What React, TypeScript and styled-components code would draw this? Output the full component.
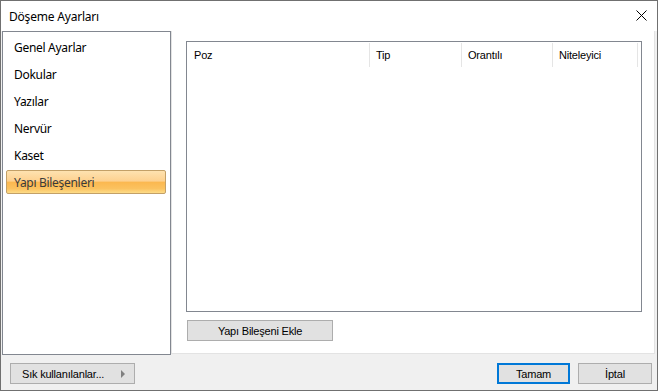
import styled, { createGlobalStyle } from "styled-components";

const GlobalStyle = createGlobalStyle`
  html, body { margin: 0; padding: 0; background: #ffffff; }
  * { box-sizing: border-box; }
`;

const uiFont = `"Noto Sans", "Open Sans", sans-serif`;
const formFont = `"Liberation Sans", Arial, sans-serif`;

const items = ["Genel Ayarlar", "Dokular", "Yazılar", "Nervür", "Kaset", "Yapı Bileşenleri"];
const columns = [
  { title: "Poz", width: 183 },
  { title: "Tip", width: 92 },
  { title: "Orantılı", width: 91 },
  { title: "Niteleyici", width: 85 },
];

export default function App() {
  return (
    <>
      <GlobalStyle />
      <Window>
        <TitleBar>
          <Title>Döşeme Ayarları</Title>
          <CloseButton>
            <svg width="11" height="11" viewBox="0 0 11 11">
              <path d="M0.5 0.5 L10.5 10.5 M10.5 0.5 L0.5 10.5" stroke="#000" strokeWidth="1" />
            </svg>
          </CloseButton>
        </TitleBar>
        <Main>
          <SideList>
            {items.map((item, i) => (
              <ListItem key={item} $selected={i === items.length - 1}>
                {item}
              </ListItem>
            ))}
          </SideList>
          <ContentPanel>
            <Table>
              <HeaderRow>
                {columns.map((col) => (
                  <HeaderCell key={col.title} $width={col.width}>
                    {col.title}
                  </HeaderCell>
                ))}
              </HeaderRow>
            </Table>
            <FormButton $width={146}>Yapı Bileşeni Ekle</FormButton>
          </ContentPanel>
        </Main>
        <Footer>
          <FormButton $width={125} $align="left">
            Sık kullanılanlar...
            <Arrow />
          </FormButton>
          <FooterRight>
            <FormButton $width={73} $default>
              Tamam
            </FormButton>
            <FormButton $width={74}>İptal</FormButton>
          </FooterRight>
        </Footer>
      </Window>
    </>
  );
}

const Window = styled.div`
  width: 658px;
  height: 391px;
  border: 1px solid #707070;
  background: #f0f0f0;
  display: flex;
  flex-direction: column;
`;

const TitleBar = styled.div`
  height: 30px;
  background: #ffffff;
  display: flex;
  align-items: center;
  justify-content: space-between;
  padding-left: 8px;
  padding-right: 10px;
`;

const Title = styled.div`
  font-family: ${uiFont};
  font-size: 12px;
  letter-spacing: -0.2px;
  color: #000;
`;

const CloseButton = styled.div`
  width: 11px;
  height: 11px;
  display: flex;
  margin-top: -1px;
`;

const Main = styled.div`
  height: 324px;
  display: flex;
  padding-left: 1px;
`;

const SideList = styled.div`
  width: 169px;
  height: 324px;
  background: #ffffff;
  border: 1px solid #828790;
  padding: 3px 3px 0 3px;
  display: flex;
  flex-direction: column;
  gap: 3px;
`;

const ListItem = styled.div<{ $selected?: boolean }>`
  height: 24px;
  width: 160px;
  display: flex;
  align-items: center;
  padding-left: 7px;
  font-family: ${uiFont};
  font-size: 12px;
  letter-spacing: -0.3px;
  color: ${(p) => (p.$selected ? "#3b3b3b" : "#000")};
  border: 1px solid ${(p) => (p.$selected ? "#c3a067" : "transparent")};
  border-radius: 2px;
  background: ${(p) =>
    p.$selected
      ? "linear-gradient(#fee2b0 0%, #fdd190 45%, #fbb850 52%, #fbc260 80%, #fddc88 100%)"
      : "transparent"};
`;

const ContentPanel = styled.div`
  width: 484px;
  height: 323px;
  background: #ffffff;
  border: 1px solid #e3e3e3;
  border-top: none;
  padding: 10px 0 0 14px;
  display: flex;
  flex-direction: column;
  gap: 8px;
`;

const Table = styled.div`
  width: 456px;
  height: 271px;
  border: 1px solid #828790;
  background: #ffffff;
`;

const HeaderRow = styled.div`
  display: flex;
  height: 26px;
  padding-top: 1px;
`;

const HeaderCell = styled.div<{ $width: number }>`
  width: ${(p) => p.$width}px;
  height: 24px;
  border-right: 1px solid #e5e5e5;
  display: flex;
  align-items: center;
  padding-left: 6px;
  font-family: ${formFont};
  font-size: 11px;
  letter-spacing: -0.2px;
  color: #000;
  &:first-child {
    padding-left: 7px;
  }
`;

const FormButton = styled.div<{ $width: number; $default?: boolean; $align?: "left" }>`
  width: ${(p) => p.$width}px;
  height: 21px;
  margin-left: 1px;
  background: #e1e1e1;
  border: ${(p) => (p.$default ? "2px solid #0078d7" : "1px solid #adadad")};
  display: flex;
  align-items: center;
  justify-content: ${(p) => (p.$align === "left" ? "space-between" : "center")};
  padding: ${(p) => (p.$align === "left" ? "0 9px 0 11px" : "0")};
  font-family: ${formFont};
  font-size: 11px;
  letter-spacing: -0.2px;
  color: #000;
`;

const Arrow = styled.span`
  width: 0;
  height: 0;
  border-top: 4px solid transparent;
  border-bottom: 4px solid transparent;
  border-left: 4px solid #808080;
`;

const Footer = styled.div`
  height: 35px;
  display: flex;
  justify-content: space-between;
  padding: 8px 5px 0 8px;
`;

const FooterRight = styled.div`
  display: flex;
  gap: 7px;
`;
